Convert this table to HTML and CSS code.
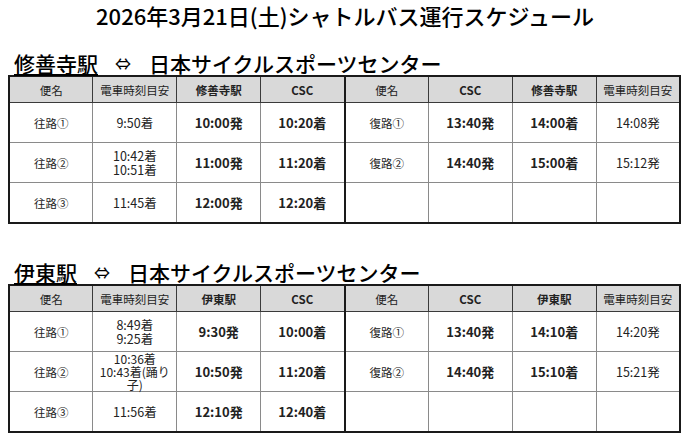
FILE: index.html
```html
<!DOCTYPE html>
<html lang="ja">
<head>
<meta charset="utf-8">
<title>シャトルバス運行スケジュール</title>
<link rel="stylesheet" href="styles.css">
</head>
<body>
<div class="page">
  <h1 class="title">2026年3月21日(土)シャトルバス運行スケジュール</h1>

  <section class="route">
    <h2 class="route-title"><span class="station">修善寺駅</span><span class="arrow">⇔</span><span>日本サイクルスポーツセンター</span></h2>
    <table class="schedule">
      <thead>
        <tr>
          <th>便名</th><th>電車時刻目安</th><th class="b">修善寺駅</th><th class="b">CSC</th>
          <th class="split">便名</th><th class="b">CSC</th><th class="b">修善寺駅</th><th>電車時刻目安</th>
        </tr>
      </thead>
      <tbody>
        <tr>
          <td class="name">往路①</td><td>9:50着</td><td class="b">10:00発</td><td class="b">10:20着</td>
          <td class="name split">復路①</td><td class="b">13:40発</td><td class="b">14:00着</td><td>14:08発</td>
        </tr>
        <tr>
          <td class="name">往路②</td><td>10:42着<br>10:51着</td><td class="b">11:00発</td><td class="b">11:20着</td>
          <td class="name split">復路②</td><td class="b">14:40発</td><td class="b">15:00着</td><td>15:12発</td>
        </tr>
        <tr>
          <td class="name">往路③</td><td>11:45着</td><td class="b">12:00発</td><td class="b">12:20着</td>
          <td class="split"></td><td></td><td></td><td></td>
        </tr>
      </tbody>
    </table>
  </section>

  <section class="route">
    <h2 class="route-title"><span class="station">伊東駅</span><span class="arrow">⇔</span><span>日本サイクルスポーツセンター</span></h2>
    <table class="schedule">
      <thead>
        <tr>
          <th>便名</th><th>電車時刻目安</th><th class="b">伊東駅</th><th class="b">CSC</th>
          <th class="split">便名</th><th class="b">CSC</th><th class="b">伊東駅</th><th>電車時刻目安</th>
        </tr>
      </thead>
      <tbody>
        <tr>
          <td class="name">往路①</td><td>8:49着<br>9:25着</td><td class="b">9:30発</td><td class="b">10:00着</td>
          <td class="name split">復路①</td><td class="b">13:40発</td><td class="b">14:10着</td><td>14:20発</td>
        </tr>
        <tr>
          <td class="name">往路②</td><td class="tight">10:36着<br>10:43着(踊り<br>子)</td><td class="b">10:50発</td><td class="b">11:20着</td>
          <td class="name split">復路②</td><td class="b">14:40発</td><td class="b">15:10着</td><td>15:21発</td>
        </tr>
        <tr>
          <td class="name">往路③</td><td>11:56着</td><td class="b">12:10発</td><td class="b">12:40着</td>
          <td class="split"></td><td></td><td></td><td></td>
        </tr>
      </tbody>
    </table>
  </section>
</div>
</body>
</html>
```

FILE: styles.css
```css
html, body {
  margin: 0;
  padding: 0;
  background: #ffffff;
}

body {
  font-family: "Noto Sans CJK JP", "Noto Sans", sans-serif;
  color: #000000;
}

.page {
  padding: 0 8px;
}

.title {
  margin: 0;
  height: 30px;
  font-size: 22px;
  line-height: 30px;
  font-weight: 500;
  text-align: center;
  letter-spacing: 0;
}

.route {
  margin-top: 21px;
}

.route + .route {
  margin-top: 36px;
}

.route-title {
  margin: 0;
  padding-left: 6px;
  display: flex;
  align-items: flex-end;
  height: 24px;
  font-size: 21px;
  line-height: 24px;
  font-weight: 500;
  white-space: nowrap;
}

.station {
  text-decoration: underline;
  text-decoration-thickness: 2px;
  text-underline-offset: 2px;
}

.arrow {
  font-size: 16px;
  margin: 0 18px 0 17px;
}

.schedule {
  width: 673px;
  border-collapse: collapse;
  table-layout: fixed;
  border: 2px solid #1a1a1a;
  color: #222222;
}

.schedule th {
  height: 25px;
  padding: 0;
  background: #d9d9d9;
  border: 1px solid #3a3a3a;
  font-size: 11.5px;
  font-weight: 400;
  text-align: center;
  vertical-align: middle;
}

.schedule td {
  height: 39px;
  padding: 0 3px;
  border: 1px solid #8a8a8a;
  font-size: 12.5px;
  line-height: 14px;
  text-align: center;
  vertical-align: middle;
}

.schedule .name {
  font-size: 11.5px;
}

.schedule .b {
  font-weight: 700;
}

.schedule td.b {
  font-size: 13px;
}

.schedule .split {
  border-left: 2px solid #1a1a1a;
}

.schedule td.tight {
  font-size: 12px;
  line-height: 13px;
}
```
